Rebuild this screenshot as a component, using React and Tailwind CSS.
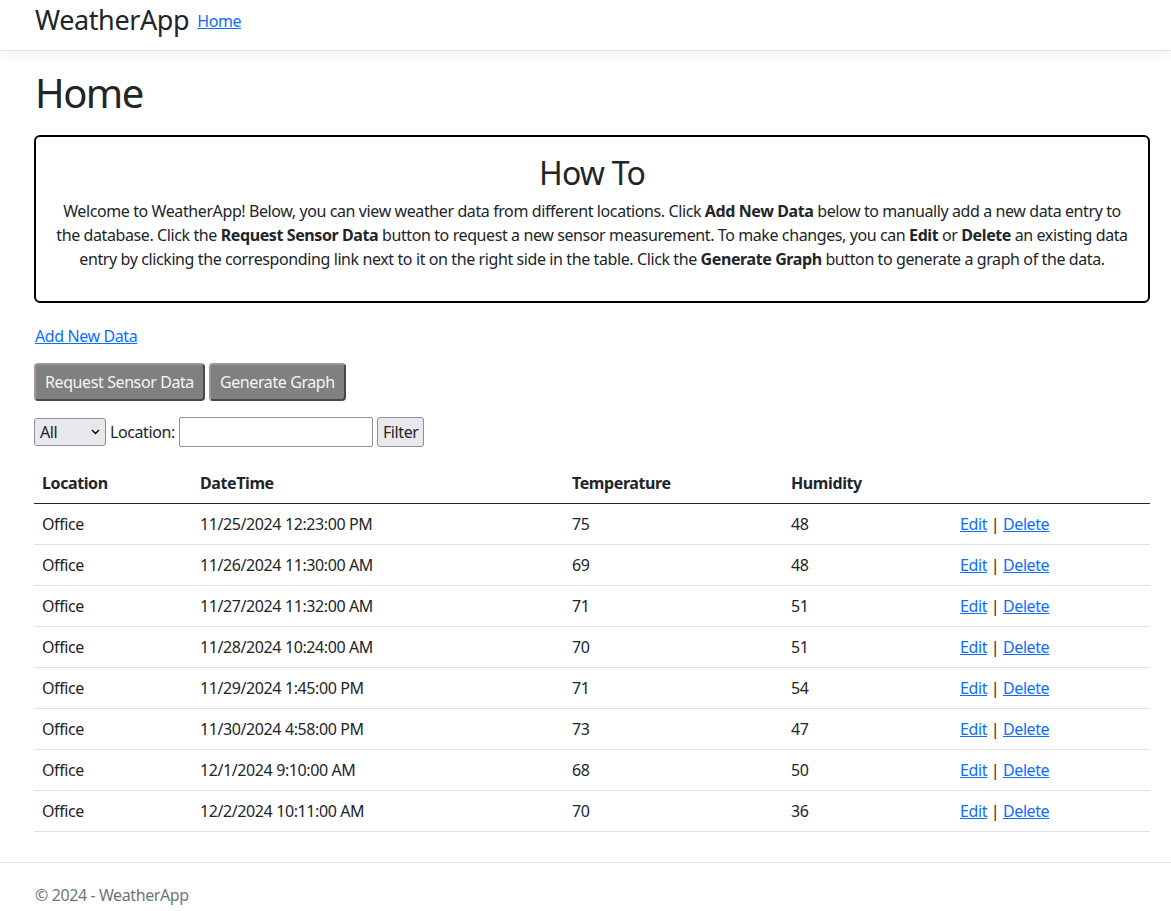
import React from 'react';

const rows = [
  ["Office", "11/25/2024 12:23:00 PM", "75", "48"],
  ["Office", "11/26/2024 11:30:00 AM", "69", "48"],
  ["Office", "11/27/2024 11:32:00 AM", "71", "51"],
  ["Office", "11/28/2024 10:24:00 AM", "70", "51"],
  ["Office", "11/29/2024 1:45:00 PM", "71", "54"],
  ["Office", "11/30/2024 4:58:00 PM", "73", "47"],
  ["Office", "12/1/2024 9:10:00 AM", "68", "50"],
  ["Office", "12/2/2024 10:11:00 AM", "70", "36"],
];

export default function App() {
  return (
    <div className="min-h-[911px] bg-white text-[#212529] text-[16px] leading-[24px] tracking-[-0.4px] font-['Segoe_UI','Noto_Sans',sans-serif] flex flex-col">
      {/* navbar */}
      <header className="h-[51px] border-b border-[#dee2e6] shadow-[0_4px_12px_rgba(0,0,0,0.05)] flex items-center pl-[35px]">
        <span className="text-[27px] leading-[32px] mr-[8px] -mt-[10px]">WeatherApp</span>
        <a href="#" className="text-[#0d6efd] underline -mt-[8px]">Home</a>
      </header>

      <main className="pl-[34px] pr-[21px] pt-[18px] flex-1">
        <h1 className="text-[40px] leading-[48px] tracking-[-1.5px] mb-[18px] pl-[1px]">Home</h1>

        <section className="border-2 border-black rounded-[6px] px-[18px] pt-[17px] pb-[14px] text-center">
          <h2 className="text-[32px] leading-[38px] tracking-[-0.8px] mb-[7px]">How To</h2>
          <p className="mb-[16px]">
            Welcome to WeatherApp! Below, you can view weather data from different locations. Click <b>Add New Data</b> below to manually add a new data entry to the database. Click the <b>Request Sensor Data</b> button to request a new sensor measurement. To make changes, you can <b>Edit</b> or <b>Delete</b> an existing data entry by clicking the corresponding link next to it on the right side in the table. Click the <b>Generate Graph</b> button to generate a graph of the data.
          </p>
        </section>

        <div className="mt-[21px] pl-[1px]">
          <a href="#" className="text-[#0d6efd] underline">Add New Data</a>
        </div>

        <div className="mt-[15px] flex gap-[4px]">
          <button className="bg-[#808080] text-[#f5f5f5] px-[9px] h-[38px] border-2 border-t-[#9a9a9a] border-l-[#9a9a9a] border-r-[#4a4a4a] border-b-[#4a4a4a] rounded-[4px]">Request Sensor Data</button>
          <button className="bg-[#808080] text-[#f5f5f5] px-[9px] h-[38px] border-2 border-t-[#9a9a9a] border-l-[#9a9a9a] border-r-[#4a4a4a] border-b-[#4a4a4a] rounded-[4px]">Generate Graph</button>
        </div>

        <div className="mt-[16px] flex items-center gap-[4px] h-[30px]">
          <div className="relative w-[72px] h-[28px] bg-[#e9e9ed] border border-[#8f8f9d] rounded-[3px] flex items-center pl-[5px]">
            <span>All</span>
            <svg className="absolute right-[5px] top-[10px]" width="9" height="6" viewBox="0 0 9 6" fill="none" stroke="#000" strokeWidth="1.4"><path d="M1 1l3.5 3.5L8 1" /></svg>
          </div>
          <span>Location:</span>
          <input className="w-[194px] h-[30px] border border-[#8f8f9d] rounded-[2px] bg-white" />
          <button className="h-[30px] px-[5px] bg-[#e9e9ed] border border-[#8f8f9d] rounded-[3px]">Filter</button>
        </div>

        <table className="mt-[16px] w-full border-collapse text-left">
          <thead>
            <tr className="border-b-[1.5px] border-[#212529]">
              <th className="px-[8px] py-[8px] font-bold w-[158px]">Location</th>
              <th className="px-[8px] py-[8px] font-bold w-[372px]">DateTime</th>
              <th className="px-[8px] py-[8px] font-bold w-[219px]">Temperature</th>
              <th className="px-[8px] py-[8px] font-bold w-[169px]">Humidity</th>
              <th className="px-[8px] py-[8px]"></th>
            </tr>
          </thead>
          <tbody>
            {rows.map((r, i) => (
              <tr key={i} className="border-b border-[#dee2e6]">
                <td className="px-[8px] py-[8px]">{r[0]}</td>
                <td className="px-[8px] py-[8px]">{r[1]}</td>
                <td className="px-[8px] py-[8px]">{r[2]}</td>
                <td className="px-[8px] py-[8px]">{r[3]}</td>
                <td className="px-[8px] py-[8px]">
                  <a href="#" className="text-[#0d6efd] underline">Edit</a> | <a href="#" className="text-[#0d6efd] underline">Delete</a>
                </td>
              </tr>
            ))}
          </tbody>
        </table>
      </main>

      <footer className="border-t border-[#dee2e6] leading-[60px] text-[#6c757d] pl-[35px] pt-[2px] mt-[30px]">
        © 2024 - WeatherApp
      </footer>
    </div>
  );
}
